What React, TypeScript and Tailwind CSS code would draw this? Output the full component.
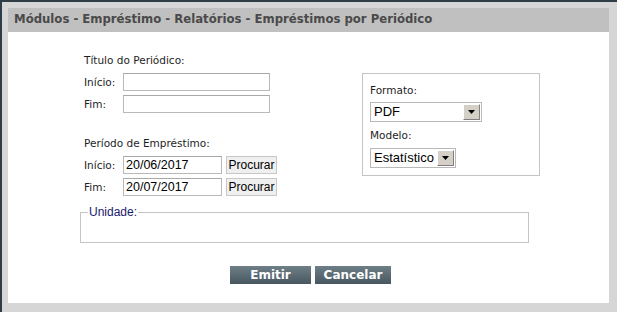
const label = "font-['DejaVu_Sans',sans-serif] text-[10.5px] leading-[16px] text-[#1e1e1e]";
const field =
  "h-[18px] border border-[#b9b9b9] border-t-[#a8a8a8] bg-white px-[2px] font-['Liberation_Sans',Arial,sans-serif] text-[12.5px] leading-[16px] text-black";

const Arrow = () => (
  <div className="flex h-full w-[17px] items-center justify-center border border-t-white border-l-white border-r-[#808080] border-b-[#808080] bg-[#d4d0c8]">
    <svg width="7" height="4" viewBox="0 0 7 4">
      <path d="M0 0h7L3.5 4z" fill="#000" />
    </svg>
  </div>
);

const Select = ({ value, width }: { value: string; width: string }) => (
  <div className={`flex h-[20px] items-stretch border border-[#b9b9b9] bg-white p-[1px] ${width}`}>
    <span className="flex-1 pl-[2px] font-['Liberation_Sans',Arial,sans-serif] text-[13px] leading-[16px] text-black">
      {value}
    </span>
    <Arrow />
  </div>
);

const Procurar = () => (
  <button className="h-[18px] w-[51px] border border-[#c8c8c8] bg-[#efefef] font-['Liberation_Sans',Arial,sans-serif] text-[12px] leading-[16px] text-black">
    Procurar
  </button>
);

export default function App() {
  return (
    <div className="flex h-[312px] w-[617px] flex-col border-l-2 border-t-2 border-[#2f3e46] bg-[#d6d6d6] pb-[9px] pl-[6px] pr-[8px] pt-[6px]">
      <div className="flex h-[24px] items-center bg-[#c0c0c0] px-[6px] font-['DejaVu_Sans',sans-serif] text-[11.7px] font-bold text-[#4a4a4a]">
        Módulos - Empréstimo - Relatórios - Empréstimos por Periódico
      </div>
      <div className="flex-1 bg-white pt-[20px]">
        <div className="flex pl-[76px]">
          <div className="w-[278px]">
            <div className={label}>Título do Periódico:</div>
            <div className="mt-[5px] flex items-center">
              <span className={`${label} w-[39px]`}>Início:</span>
              <div className={`${field} w-[147px]`} />
            </div>
            <div className="mt-[4px] flex items-center">
              <span className={`${label} w-[39px]`}>Fim:</span>
              <div className={`${field} w-[147px]`} />
            </div>
            <div className={`${label} mt-[22px]`}>Período de Empréstimo:</div>
            <div className="mt-[5px] flex items-center gap-[4px]">
              <span className={`${label} w-[35px]`}>Início:</span>
              <div className={`${field} w-[99px]`}>20/06/2017</div>
              <Procurar />
            </div>
            <div className="mt-[4px] flex items-center gap-[4px]">
              <span className={`${label} w-[35px]`}>Fim:</span>
              <div className={`${field} w-[99px]`}>20/07/2017</div>
              <Procurar />
            </div>
          </div>
          <div className="mt-[21px] h-[103px] w-[178px] self-start border border-[#c4c4c4] pl-[7px] pt-[8px]">
            <div className={label}>Formato:</div>
            <div className="mt-[4px]">
              <Select value="PDF" width="w-[112px]" />
            </div>
            <div className={`${label} mt-[5px]`}>Modelo:</div>
            <div className="mt-[5px]">
              <Select value="Estatístico" width="w-[86px]" />
            </div>
          </div>
        </div>
        <fieldset className="ml-[72px] mt-[9px] h-[38px] w-[449px] border border-[#c4c4c4] px-[7px]">
          <legend className="px-[1px] font-['Liberation_Sans',Arial,sans-serif] text-[12px] leading-[14px] text-[#1a1a70]">
            Unidade:
          </legend>
        </fieldset>
        <div className="mt-[23px] flex gap-[4px] pl-[222px]">
          <button className="h-[18px] w-[81px] bg-gradient-to-b from-[#6f7f88] to-[#48575f] font-['DejaVu_Sans',sans-serif] text-[12px] font-bold text-white">
            Emitir
          </button>
          <button className="h-[18px] w-[76px] bg-gradient-to-b from-[#6f7f88] to-[#48575f] font-['DejaVu_Sans',sans-serif] text-[12px] font-bold text-white">
            Cancelar
          </button>
        </div>
      </div>
    </div>
  );
}
